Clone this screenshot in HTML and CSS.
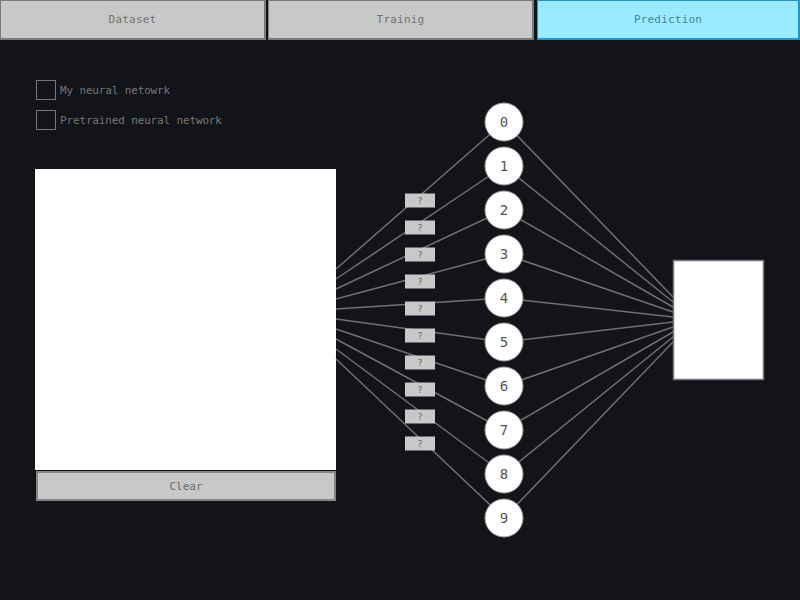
FILE: index.html
```html
<!DOCTYPE html>
<html>
<head>
<meta charset="utf-8">
<link rel="stylesheet" href="styles.css">
</head>
<body>
<div class="app">
  <nav class="tabs">
    <div class="tab">Dataset</div>
    <div class="tab">Trainig</div>
    <div class="tab active">Prediction</div>
  </nav>
  <main class="main">
    <div class="options">
      <label class="opt"><span class="box"></span><span>My neural netowrk</span></label>
      <label class="opt"><span class="box"></span><span>Pretrained neural network</span></label>
    </div>
    <div class="draw"></div>
    <div class="clear">Clear</div>
  </main>
  <svg class="net" width="800" height="600" viewBox="0 0 800 600">
    <g class="links" id="links"></g>
    <rect class="out" x="673.5" y="260.5" width="90" height="119"/>
    <g id="qs"></g>
    <g id="nodes"></g>
  </svg>
</div>
<script src="app.js"></script>
</body>
</html>
```
FILE: app.js
```js
(function(){
  var NS = "http://www.w3.org/2000/svg";
  var links = document.getElementById("links");
  var qs = document.getElementById("qs");
  var nodes = document.getElementById("nodes");
  function el(name, attrs, parent, text){
    var e = document.createElementNS(NS, name);
    for (var k in attrs) e.setAttribute(k, attrs[k]);
    if (text !== undefined) e.textContent = text;
    parent.appendChild(e);
    return e;
  }
  for (var i = 0; i < 10; i++){
    var cx = 504, cy = 122 + 44 * i;
    el("line", {x1: 336, y1: 269 + 10 * i, x2: cx, y2: cy}, links);
    el("line", {x1: cx, y1: cy, x2: 673, y2: 297 + 5 * i}, links);
  }
  for (var j = 0; j < 10; j++){
    var y = 193.5 + 27 * j;
    el("rect", {x: 405, y: y, width: 30, height: 14, "class": "q"}, qs);
    el("text", {x: 420, y: y + 10, "class": "qt"}, qs, "?");
  }
  for (var n = 0; n < 10; n++){
    var cy2 = 122 + 44 * n;
    el("circle", {cx: 504, cy: cy2, r: 19, "class": "node"}, nodes);
    el("text", {x: 504, y: cy2 + 5, "class": "digit"}, nodes, String(n));
  }
})();
```
FILE: styles.css
```css
html, body {
  margin: 0;
  padding: 0;
  background: #131419;
}
.app {
  position: relative;
  width: 800px;
  height: 600px;
  overflow: hidden;
  font-family: "DejaVu Sans Mono", "Liberation Mono", monospace;
  font-size: 11px;
}
.tabs {
  display: grid;
  grid-template-columns: 266px 266px 1fr;
  column-gap: 2px;
  height: 40px;
}
.tab {
  box-sizing: border-box;
  background: #c8c8c8;
  border-top: 1px solid #7a7a7a;
  border-left: 1px solid #7a7a7a;
  border-right: 2px solid #7a7a7a;
  border-bottom: 2px solid #7a7a7a;
  color: #727272;
  display: flex;
  align-items: center;
  justify-content: center;
  letter-spacing: 0.2px;
}
.tab.active {
  margin-left: 1px;
  background: #9ceaff;
  border-color: #2596c8;
  color: #3a86a8;
}
.main {
  padding: 40px 0 0 35px;
  display: flex;
  flex-direction: column;
  align-items: flex-start;
}
.options {
  display: flex;
  flex-direction: column;
  gap: 10px;
  margin-left: 1px;
}
.opt {
  display: flex;
  align-items: center;
  gap: 4px;
  color: #767676;
  height: 20px;
  letter-spacing: -0.15px;
}
.box {
  box-sizing: border-box;
  width: 20px;
  height: 20px;
  border: 1px solid #777;
}
.draw {
  margin-top: 39px;
  width: 301px;
  height: 301px;
  background: #ffffff;
}
.clear {
  box-sizing: border-box;
  margin: 1px 0 0 1px;
  width: 300px;
  height: 30px;
  background: #c8c8c8;
  border: 2px solid #868686;
  color: #6a6a6a;
  display: flex;
  align-items: center;
  justify-content: center;
}
.net {
  position: absolute;
  left: 0;
  top: 0;
  pointer-events: none;
}
.links line {
  stroke: #707070;
  stroke-width: 1.5;
}
.out {
  fill: #ffffff;
  stroke: #777777;
  stroke-width: 1.5;
}
.q {
  fill: #c8c8c8;
}
.qt {
  font-family: "DejaVu Sans Mono", monospace;
  font-size: 9px;
  fill: #666;
  text-anchor: middle;
}
.node {
  fill: #ffffff;
  stroke: #9a9a9a;
  stroke-width: 1;
}
.digit {
  font-family: "DejaVu Sans Mono", monospace;
  font-size: 14px;
  fill: #555;
  text-anchor: middle;
}
```
